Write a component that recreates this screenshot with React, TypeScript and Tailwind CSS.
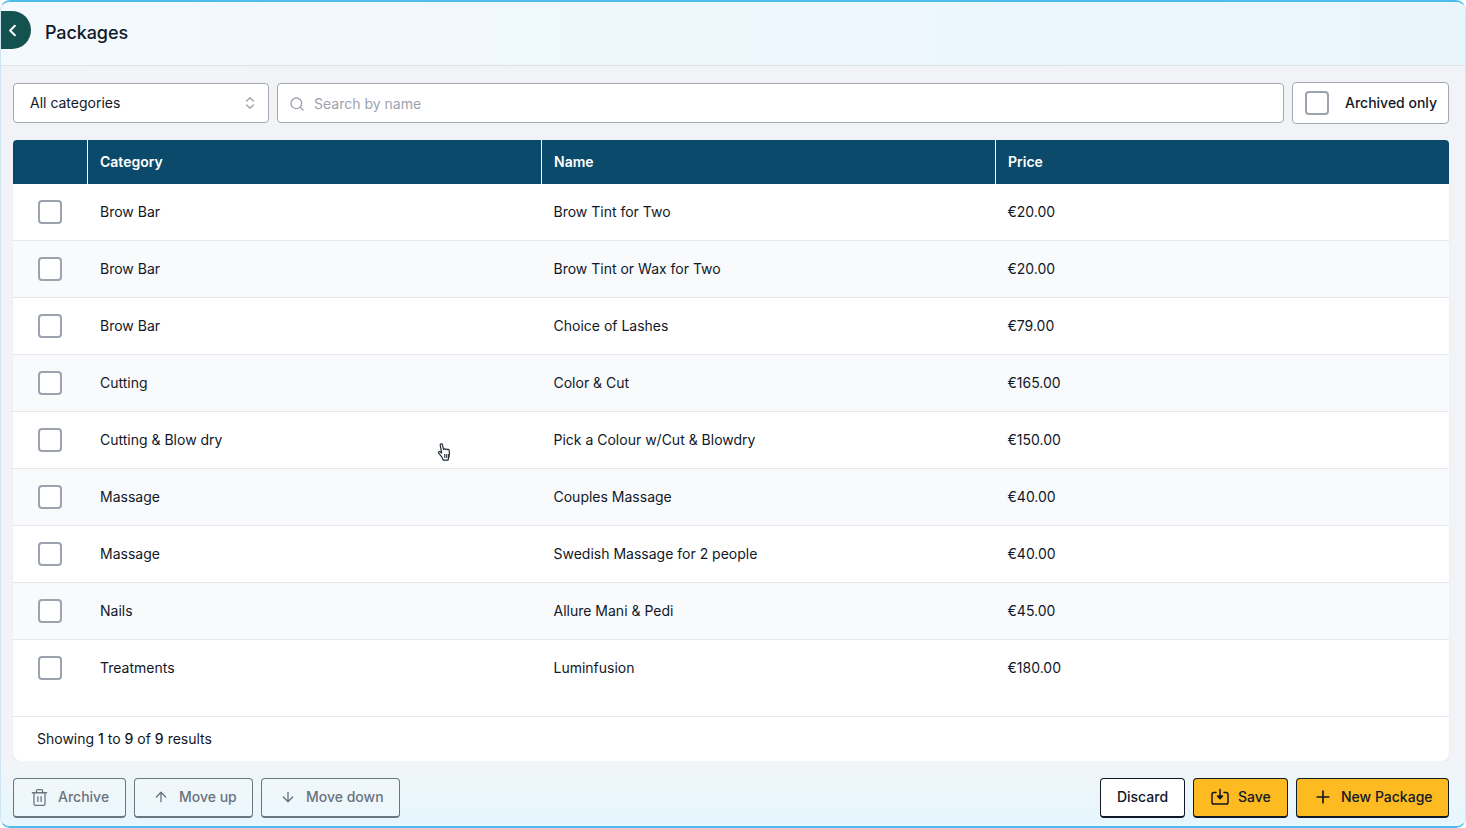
import React from "react";
import { ChevronLeft, ChevronsUpDown, Search, Trash2, ArrowUp, ArrowDown, Plus } from "lucide-react";

const rows = [
  ["Brow Bar", "Brow Tint for Two", "€20.00"],
  ["Brow Bar", "Brow Tint or Wax for Two", "€20.00"],
  ["Brow Bar", "Choice of Lashes", "€79.00"],
  ["Cutting", "Color & Cut", "€165.00"],
  ["Cutting & Blow dry", "Pick a Colour w/Cut & Blowdry", "€150.00"],
  ["Massage", "Couples Massage", "€40.00"],
  ["Massage", "Swedish Massage for 2 people", "€40.00"],
  ["Nails", "Allure Mani & Pedi", "€45.00"],
  ["Treatments", "Luminfusion", "€180.00"],
];

function SaveIcon() {
  return (
    <svg width="18" height="18" viewBox="0 0 18 18" fill="none" stroke="#111827" strokeWidth="1.5" strokeLinecap="round" strokeLinejoin="round">
      <path d="M5 4.500H2.800A1.800 1.800 0 0 0 1 6.300v7.900A1.800 1.800 0 0 0 2.800 16h12.400a1.800 1.800 0 0 0 1.800-1.800V6.300a1.800 1.800 0 0 0-1.800-1.800H13" />
      <path d="M9 1.500v7" />
      <path d="M6.500 8 9 10.800 11.500 8z" fill="#111827" />
    </svg>
  );
}

function HandCursor() {
  return (
    <svg width="18" height="22" viewBox="0 0 16 20" className="absolute left-[435px] top-[440px]">
      <path d="M4 1.800c.7-.5 1.500 0 1.700.8l1 4.200c.3-.8 1.500-.8 1.800 0 .3-.6 1.400-.6 1.700.2.400-.5 1.400-.3 1.600.4.400 2 .3 4.400-.5 6.500l-.5 2.600H6.500L5 13.500 2.300 10.200c-.7-.9.300-1.900 1.200-1.300L5 10 3.700 3.300c-.1-.6-.1-1.100.3-1.500z" fill="#fff" stroke="#1f2937" strokeWidth="1.100" strokeLinejoin="round" />
      <path d="M7.800 11v3.500M9.600 11v3.500M11.400 11v3.500" stroke="#1f2937" strokeWidth="1" />
    </svg>
  );
}

const ghost = "flex h-10 items-center rounded-[4px] border border-[#6b7780] border-b-2 bg-white/20 pb-[1px] text-sm font-medium text-[#6b7280]";
const primary = "flex h-10 items-center rounded-[4px] border border-[#111827] border-b-2 pb-[1px] text-sm font-medium text-[#111827]";

export default function App() {
  return (
    <div
      className="relative flex h-[828px] w-[1466px] flex-col overflow-hidden rounded-[10px] border-x border-y-2 border-x-[#cfe6f2] border-y-[#4dbdec] bg-[#f1f3f6] text-[#111827]"
      style={{ fontFamily: "Inter, 'Liberation Sans', sans-serif" }}
    >
      <header className="flex h-[64px] shrink-0 items-start border-b border-[#dfe3e8] bg-gradient-to-r from-[#f4f9fd] to-[#e8f6fc] pt-[9px]">
        <div className="ml-[-1px] flex h-[38px] w-[31px] items-center justify-center rounded-r-[19px] bg-[#13524f] pr-[7px] text-white">
          <ChevronLeft size={19} strokeWidth={2.5} />
        </div>
        <h1 className="ml-[14px] mt-[13px] text-[18px] font-medium leading-none tracking-[-0.1px]">Packages</h1>
      </header>

      <main className="flex flex-1 flex-col pl-3 pr-4 pt-4">
        <div className="flex h-[42px] items-center gap-2">
          <div className="flex h-10 w-[256px] items-center justify-between rounded-[4px] border border-[#a3a8b4] bg-white pl-4 pr-[10px] text-sm">
            All categories
            <ChevronsUpDown size={16} className="text-[#9ca3af]" />
          </div>
          <div className="flex h-10 flex-1 items-center rounded-[4px] border border-[#a3a8b4] bg-white pl-[10.5px] pt-[1px] text-sm text-[#9ca3af]">
            <Search size={16} className="mr-[9.5px] text-[#9ca3af]" strokeWidth={2} />
            Search by name
          </div>
          <div className="flex h-[42px] w-[157px] items-center rounded-[4px] border border-[#a3a8b4] bg-white pl-3 text-sm font-medium">
            <span className="mr-4 h-6 w-6 rounded-[4px] border-2 border-[#9ca3af]" />
            Archived only
          </div>
        </div>

        <section className="mt-4 h-[621px] overflow-hidden rounded-t-[4px] rounded-b-[8px] bg-white shadow-[0_1px_2px_rgba(0,0,0,0.05)]">
          <div className="grid h-[44px] grid-cols-[75px_454px_454px_453px] bg-[#0c4a6b] text-sm font-semibold text-white">
            <div className="border-r border-white" />
            <div className="flex items-center border-r border-white pl-3">Category</div>
            <div className="flex items-center border-r border-white pl-3">Name</div>
            <div className="flex items-center pl-3">Price</div>
          </div>
          <div className="h-[533px] border-b border-[#e5e7eb]">
            {rows.map((r, i) => (
              <div
                key={i}
                className={`grid h-[57px] grid-cols-[75px_454px_454px_453px] items-center border-b text-sm ${i < 8 ? "border-[#e5e7eb]" : "border-transparent"} ${i % 2 === 1 ? "bg-[#f9fafc]" : "bg-white"}`}
              >
                <div className="flex justify-center pr-[2px]">
                  <span className="h-6 w-6 rounded-[4px] border-2 border-[#9ca3af] bg-white" />
                </div>
                <div className="pl-3">{r[0]}</div>
                <div className="pl-[11.5px]">{r[1]}</div>
                <div className="pl-[11.5px]">{r[2]}</div>
              </div>
            ))}
          </div>
          <div className="flex h-[44px] items-center pl-6 text-sm">
            <span>
              Showing <b className="font-medium">1</b> to <b className="font-medium">9</b> of <b className="font-medium">9</b> results
            </span>
          </div>
        </section>
      </main>

      <footer className="flex h-[65px] shrink-0 items-start justify-between bg-gradient-to-b from-[#f1f5f8] to-[#e6f7fd] pl-3 pr-4 pt-[17px]">
        <div className="flex gap-2">
          <div className={`${ghost} w-[113px] pl-4`}>
            <Trash2 size={19} className="mr-[9px]" strokeWidth={1.6} />
            Archive
          </div>
          <div className={`${ghost} w-[119px] pl-[18px]`}>
            <ArrowUp size={16} className="mr-[10px]" strokeWidth={2} />
            Move up
          </div>
          <div className={`${ghost} w-[139px] pl-[18px]`}>
            <ArrowDown size={16} className="mr-[10px]" strokeWidth={2} />
            Move down
          </div>
        </div>
        <div className="flex gap-2">
          <div className={`${primary} w-[85px] justify-center bg-white`}>Discard</div>
          <div className={`${primary} w-[95px] bg-[#fdba21] pl-[17px]`}>
            <span className="mr-[9px]"><SaveIcon /></span>
            Save
          </div>
          <div className={`${primary} w-[153px] bg-[#fdba21] pl-4`}>
            <Plus size={20} className="mr-2" strokeWidth={2} />
            New Package
          </div>
        </div>
      </footer>
      <HandCursor />
    </div>
  );
}
